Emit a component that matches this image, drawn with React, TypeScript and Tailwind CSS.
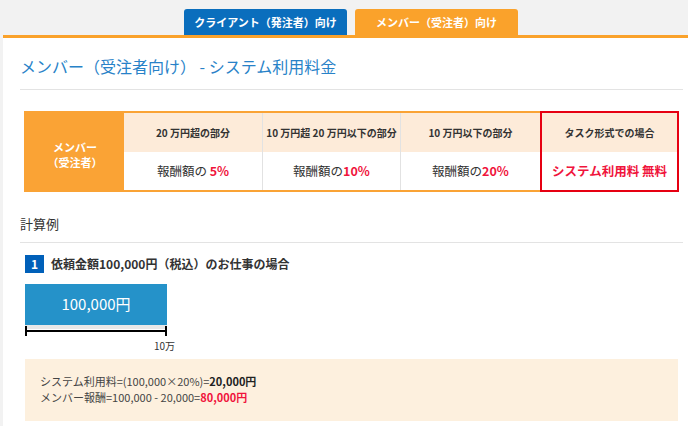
import React from "react";

const JP = "font-['Meiryo','Noto_Sans_CJK_JP',sans-serif]";

const HEADERS = [
  { label: "20 万円超の部分", rate: "5%", w: "w-[138px]", gap: true },
  { label: "10 万円超 20 万円以下の部分", rate: "10%", w: "w-[138px]", gap: false },
  { label: "10 万円以下の部分", rate: "20%", w: "w-[140px]", gap: false },
];

export default function App() {
  return (
    <div className={`w-[688px] h-[426px] overflow-hidden bg-[#f2f2f2] text-[#333] ${JP}`}>
      {/* Tabs */}
      <div className="flex gap-[8px] pl-[184px] pt-[9px] h-[35px]">
        <div className="w-[163px] h-[26px] rounded-t-[3px] bg-[#0a6ebd] text-white text-[11px] font-bold flex items-center justify-center">
          クライアント（発注者）向け
        </div>
        <div className="w-[163px] h-[26px] rounded-t-[3px] bg-[#faa22b] text-white text-[11px] font-bold flex items-center justify-center">
          メンバー（受注者）向け
        </div>
      </div>

      {/* Panel */}
      <div className="ml-[3px] h-[391px] bg-white border-t-[3px] border-[#faa22b] pl-[17px] pr-[5px]">
        <h2 className="pt-[18px] pb-[13px] text-[16px] leading-[20px] text-[#2882c8] border-b border-[#e3e3e3]">
          メンバー（受注者向け） - システム利用料金
        </h2>

        {/* Fee table */}
        <div className="flex mt-[21px] ml-[4px]">
          <div className="flex border-y-2 border-l-2 border-[#faa335]">
            <div className="w-[98px] bg-[#faa335] text-white text-[11px] font-bold leading-[15px] flex flex-col items-center justify-center pt-[6px]">
              <span>メンバー</span>
              <span>（受注者）</span>
            </div>
            {HEADERS.map((h, i) => (
              <div key={h.label} className={`${h.w} flex flex-col ${i > 0 ? "border-l border-[#e2e2e2]" : ""}`}>
                <div className="h-[39px] bg-[#fdebd9] text-[10px] font-bold flex items-center justify-center">
                  {h.label}
                </div>
                <div className="h-[38px] text-[12.5px] flex items-center justify-center">
                  報酬額の{h.gap ? "\u00a0" : ""}
                  <span className="text-[#f0143c] font-bold">{h.rate}</span>
                </div>
              </div>
            ))}
          </div>
          <div className="w-[139px] border-2 border-[#e60012] flex flex-col">
            <div className="h-[39px] bg-[#fdebd9] text-[10px] font-bold flex items-center justify-center">
              タスク形式での場合
            </div>
            <div className="h-[38px] text-[12.5px] font-bold text-[#f0143c] flex items-center justify-center">
              システム利用料 無料
            </div>
          </div>
        </div>

        {/* Example */}
        <h3 className="mt-[23px] pb-[10px] text-[13px] leading-[17px] border-b border-[#e3e3e3]">計算例</h3>

        <div className="flex items-center gap-[7px] mt-[12px] ml-[5px]">
          <span className="w-[19px] h-[18px] bg-[#0060b9] text-white text-[12px] font-bold flex items-center justify-center">1</span>
          <span className="text-[12px] font-bold">依頼金額100,000円（税込）のお仕事の場合</span>
        </div>

        <div className="ml-[5px] mt-[11px] w-[142px]">
          <div className="h-[41px] bg-[#2592c9] text-white text-[15px] flex items-center justify-center">100,000円</div>
          <div className="relative h-[11px]">
            <div className="h-[4px] bg-[#e8e8e8]" />
            <div className="h-[2px] mt-[1px] bg-black" />
            <div className="absolute left-0 top-[1px] w-[2px] h-[10px] bg-black" />
            <div className="absolute right-0 top-[1px] w-[2px] h-[10px] bg-black" />
          </div>
          <div className="text-[10px] leading-[12px] mt-[4px] text-right mr-[-8px]">10万</div>
        </div>

        <div className="ml-[5px] mt-[7px] mr-[5px] h-[62px] bg-[#fdf0de] pl-[15px] pt-[14px] text-[11px] leading-[16px] text-[#444]">
          <div>
            システム利用料=(100,000×20%)=<span className="font-bold text-[#222]">20,000円</span>
          </div>
          <div>
            メンバー報酬=100,000 - 20,000=<span className="font-bold text-[#f0143c]">80,000円</span>
          </div>
        </div>
      </div>
    </div>
  );
}
